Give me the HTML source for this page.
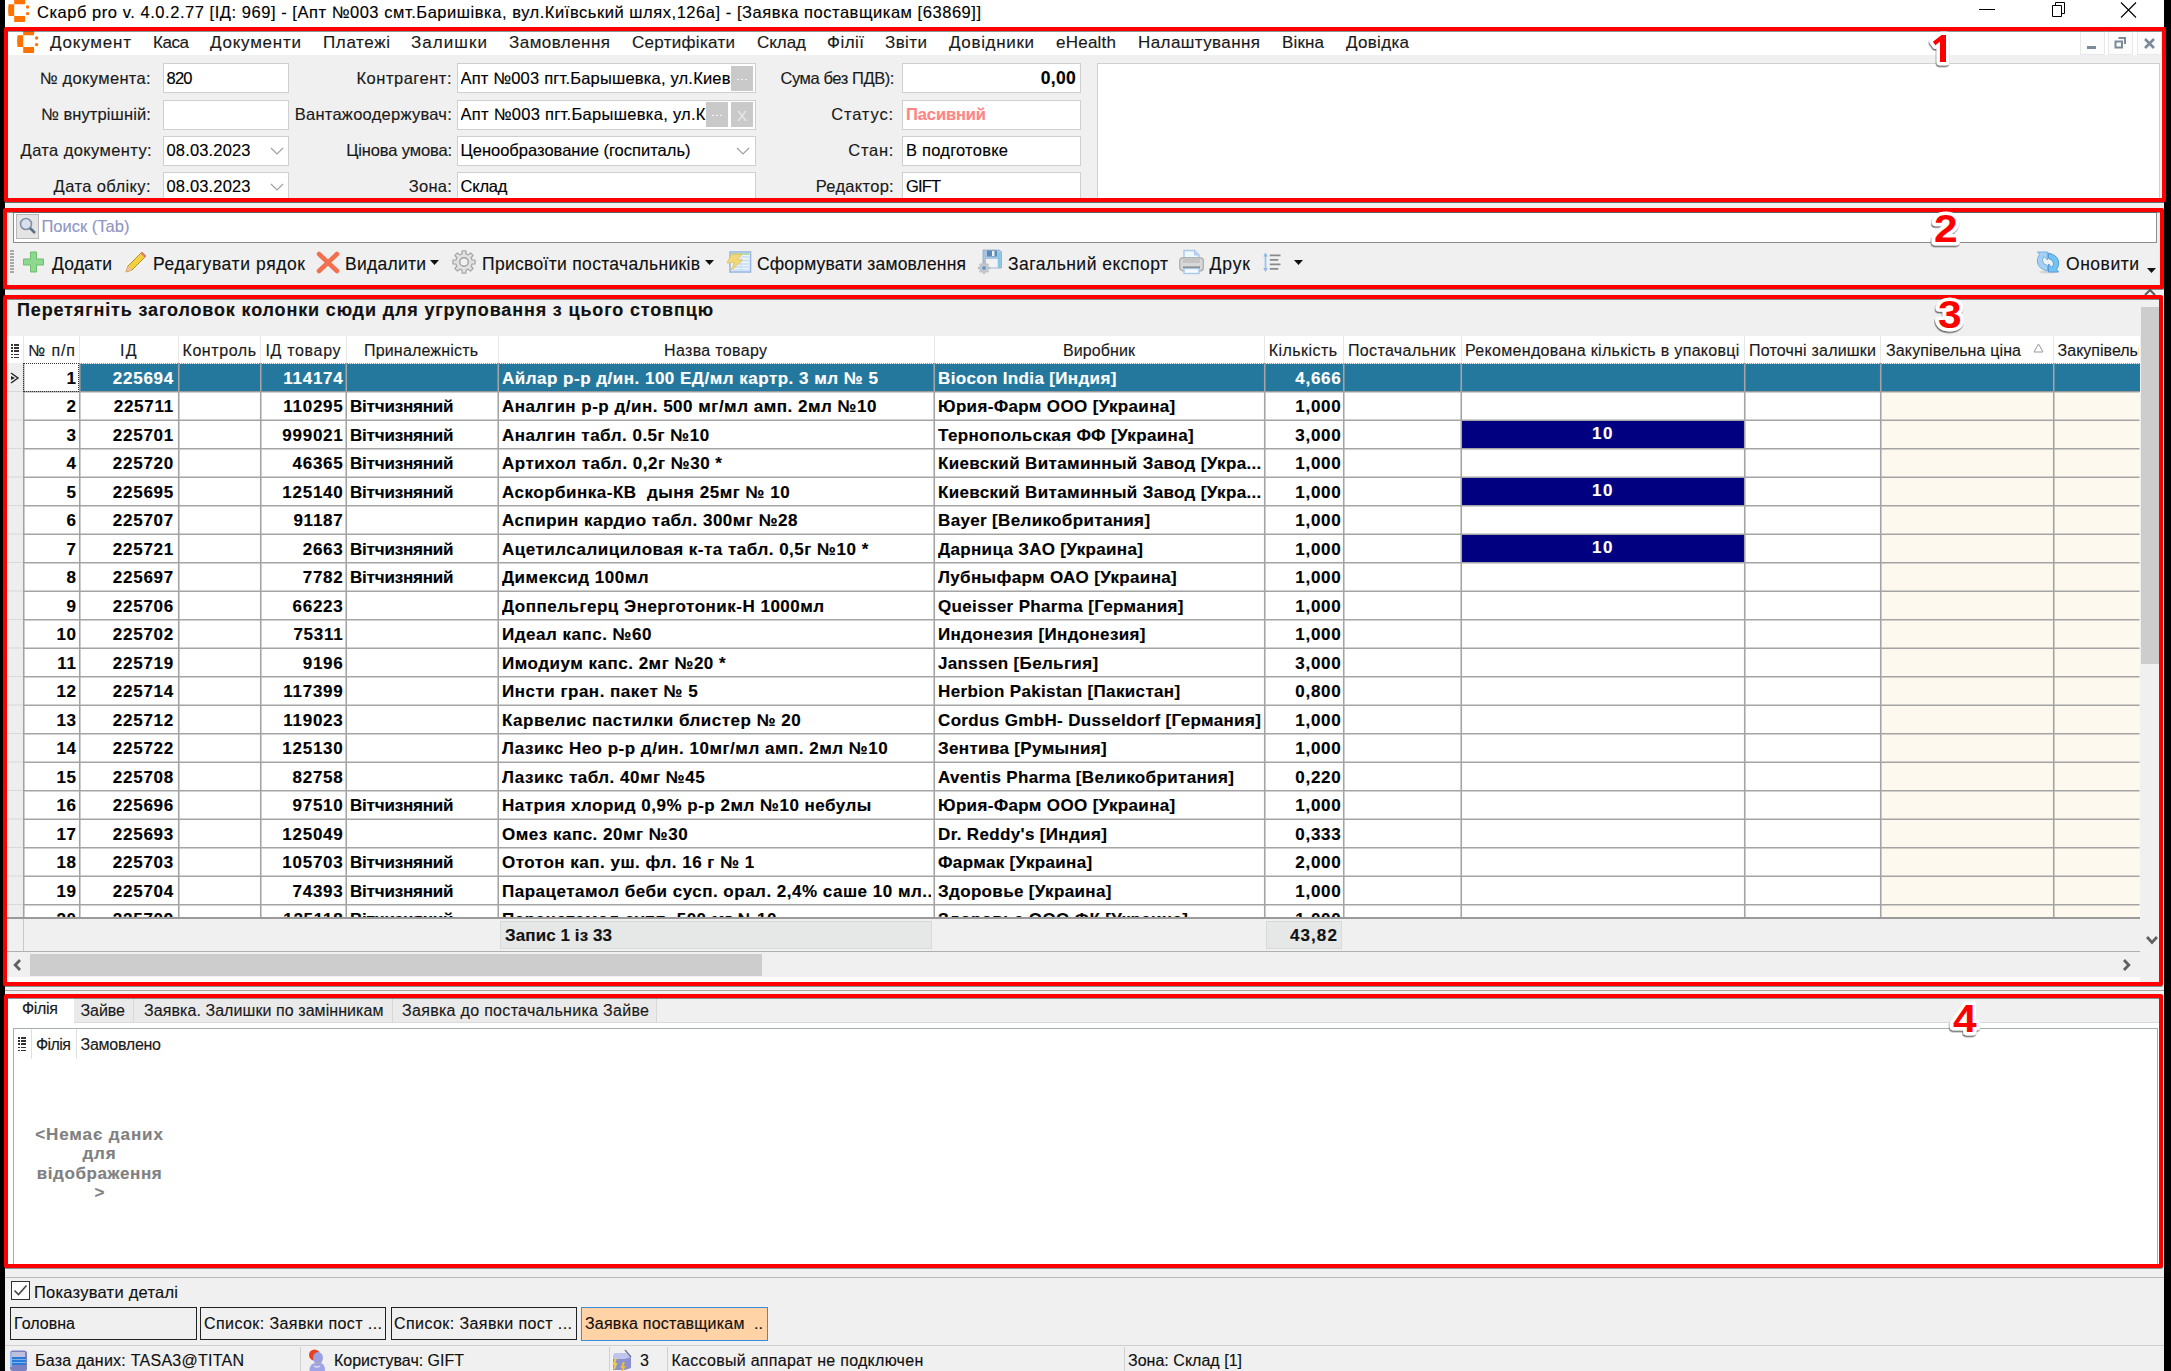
<!DOCTYPE html>
<html><head><meta charset="utf-8"><title>Скарб pro</title>
<style>
html,body{margin:0;padding:0;}
body{width:2171px;height:1371px;overflow:hidden;position:relative;background:#f0f0f0;font-family:"Liberation Sans", sans-serif;-webkit-font-smoothing:antialiased;-webkit-text-stroke:0.15px currentColor;}
div{box-sizing:content-box;}
</style></head><body>
<div style="position:absolute;left:0px;top:0px;width:2171px;height:26px;background:#fff"></div>
<svg style="position:absolute;left:8.2px;top:-1.5px" width="22" height="24" viewBox="0 0 22 24">
<path d="M6.2 0.3 H16.8 Q17.6 2.5 16.9 5.3 H6.2 Z" fill="#ff7200"/>
<path d="M0.6 5.3 H6.2 V17 H0.6 Q-0.3 11 0.6 5.3 Z" fill="#ff7200"/>
<path d="M6.2 17 H16.9 Q17.6 19.8 16.8 23 H6.2 Z" fill="#ff7200"/>
<path d="M6.2 5.3 Q4 5.5 3.2 5.3 Z" fill="#ff7200"/>
<circle cx="19.6" cy="8" r="1.7" fill="#ff7200"/><circle cx="19.6" cy="14.6" r="1.7" fill="#ff7200"/></svg>
<div id="t0" style="position:absolute;left:37px;top:2.77px;font-size:16.5px;font-weight:400;color:#000;white-space:pre;line-height:normal;letter-spacing:0.539px;"><span>Скарб pro v. 4.0.2.77 [ІД: 969] - [Апт №003 смт.Баришівка, вул.Київський шлях,126а] - [Заявка поставщикам [63869]]</span></div>
<div style="position:absolute;left:1979px;top:9px;width:16px;height:1px;background:#000"></div>
<svg style="position:absolute;left:2048px;top:1px" width="20" height="18" viewBox="0 0 20 18"><path d="M4.5 4.5 H13.5 V15.5 H4.5 Z M7.5 4.5 V1.5 H16.5 V12.5 H13.5" fill="none" stroke="#000" stroke-width="1"/></svg>
<svg style="position:absolute;left:2119px;top:1px" width="19" height="18" viewBox="0 0 19 18"><path d="M2 1.5 L17 16.5 M17 1.5 L2 16.5" stroke="#000" stroke-width="1.1"/></svg>
<div style="position:absolute;left:0px;top:26px;width:2171px;height:29px;background:#fff"></div>
<svg style="position:absolute;left:16.9px;top:30.4px" width="22" height="24" viewBox="0 0 22 24">
<path d="M6.2 0.3 H16.8 Q17.6 2.5 16.9 5.3 H6.2 Z" fill="#ff7200"/>
<path d="M0.6 5.3 H6.2 V17 H0.6 Q-0.3 11 0.6 5.3 Z" fill="#ff7200"/>
<path d="M6.2 17 H16.9 Q17.6 19.8 16.8 23 H6.2 Z" fill="#ff7200"/>
<path d="M6.2 5.3 Q4 5.5 3.2 5.3 Z" fill="#ff7200"/>
<circle cx="19.6" cy="8" r="1.7" fill="#ff7200"/><circle cx="19.6" cy="14.6" r="1.7" fill="#ff7200"/></svg>
<div id="t1" style="position:absolute;left:50px;top:32.91px;font-size:17px;font-weight:400;color:#1a1a1a;white-space:pre;line-height:normal;letter-spacing:0.797px;"><span>Документ</span></div>
<div id="t2" style="position:absolute;left:153px;top:32.91px;font-size:17px;font-weight:400;color:#1a1a1a;white-space:pre;line-height:normal;letter-spacing:-0.438px;"><span>Каса</span></div>
<div id="t3" style="position:absolute;left:210px;top:32.91px;font-size:17px;font-weight:400;color:#1a1a1a;white-space:pre;line-height:normal;letter-spacing:0.760px;"><span>Документи</span></div>
<div id="t4" style="position:absolute;left:323px;top:32.91px;font-size:17px;font-weight:400;color:#1a1a1a;white-space:pre;line-height:normal;letter-spacing:0.628px;"><span>Платежі</span></div>
<div id="t5" style="position:absolute;left:411px;top:32.91px;font-size:17px;font-weight:400;color:#1a1a1a;white-space:pre;line-height:normal;letter-spacing:1.047px;"><span>Залишки</span></div>
<div id="t6" style="position:absolute;left:509px;top:32.91px;font-size:17px;font-weight:400;color:#1a1a1a;white-space:pre;line-height:normal;letter-spacing:0.458px;"><span>Замовлення</span></div>
<div id="t7" style="position:absolute;left:632px;top:32.91px;font-size:17px;font-weight:400;color:#1a1a1a;white-space:pre;line-height:normal;letter-spacing:0.295px;"><span>Сертифікати</span></div>
<div id="t8" style="position:absolute;left:757px;top:32.91px;font-size:17px;font-weight:400;color:#1a1a1a;white-space:pre;line-height:normal;letter-spacing:-0.051px;"><span>Склад</span></div>
<div id="t9" style="position:absolute;left:827px;top:32.91px;font-size:17px;font-weight:400;color:#1a1a1a;white-space:pre;line-height:normal;letter-spacing:0.469px;"><span>Філії</span></div>
<div id="t10" style="position:absolute;left:885px;top:32.91px;font-size:17px;font-weight:400;color:#1a1a1a;white-space:pre;line-height:normal;letter-spacing:0.410px;"><span>Звіти</span></div>
<div id="t11" style="position:absolute;left:949px;top:32.91px;font-size:17px;font-weight:400;color:#1a1a1a;white-space:pre;line-height:normal;letter-spacing:0.660px;"><span>Довідники</span></div>
<div id="t12" style="position:absolute;left:1056px;top:32.91px;font-size:17px;font-weight:400;color:#1a1a1a;white-space:pre;line-height:normal;letter-spacing:0.232px;"><span>eHealth</span></div>
<div id="t13" style="position:absolute;left:1138px;top:32.91px;font-size:17px;font-weight:400;color:#1a1a1a;white-space:pre;line-height:normal;letter-spacing:0.409px;"><span>Налаштування</span></div>
<div id="t14" style="position:absolute;left:1282px;top:32.91px;font-size:17px;font-weight:400;color:#1a1a1a;white-space:pre;line-height:normal;letter-spacing:0.148px;"><span>Вікна</span></div>
<div id="t15" style="position:absolute;left:1346px;top:32.91px;font-size:17px;font-weight:400;color:#1a1a1a;white-space:pre;line-height:normal;letter-spacing:0.307px;"><span>Довідка</span></div>
<div style="position:absolute;left:2080px;top:31px;width:25px;height:24px;background:#fcfcfc;border:1px solid #e8e8e8;box-sizing:border-box"></div>
<div style="position:absolute;left:2108px;top:31px;width:25px;height:24px;background:#fcfcfc;border:1px solid #e8e8e8;box-sizing:border-box"></div>
<div style="position:absolute;left:2137px;top:31px;width:25px;height:24px;background:#fcfcfc;border:1px solid #e8e8e8;box-sizing:border-box"></div>
<div style="position:absolute;left:2087px;top:46px;width:9px;height:3px;background:#7a8a99"></div>
<svg style="position:absolute;left:2114px;top:36px" width="14" height="14" viewBox="0 0 14 14"><path d="M4.5 2 H11 V8 M1.5 5.5 H8 V11.5 H1.5 Z" fill="none" stroke="#7a8a99" stroke-width="2"/></svg>
<svg style="position:absolute;left:2143px;top:37px" width="13" height="13" viewBox="0 0 13 13"><path d="M2 2 L11 11 M11 2 L2 11" stroke="#7a8a99" stroke-width="2.6"/></svg>
<div style="position:absolute;left:0px;top:55px;width:2171px;height:147px;background:#f0f0f0"></div>
<div id="t16" style="position:absolute;right:2020px;top:68.77px;font-size:16.5px;font-weight:400;color:#1a1a1a;white-space:pre;line-height:normal;letter-spacing:0.334px;"><span>№ документа:</span></div>
<div id="t17" style="position:absolute;right:2020px;top:104.77px;font-size:16.5px;font-weight:400;color:#1a1a1a;white-space:pre;line-height:normal;letter-spacing:0.113px;"><span>№ внутрішній:</span></div>
<div id="t18" style="position:absolute;right:2019px;top:140.77px;font-size:16.5px;font-weight:400;color:#1a1a1a;white-space:pre;line-height:normal;letter-spacing:0.385px;"><span>Дата документу:</span></div>
<div id="t19" style="position:absolute;right:2020px;top:176.77px;font-size:16.5px;font-weight:400;color:#1a1a1a;white-space:pre;line-height:normal;letter-spacing:0.405px;"><span>Дата обліку:</span></div>
<div style="position:absolute;left:163px;top:63px;width:126px;height:30px;background:#fff;border:1px solid #cfcfcf;box-sizing:border-box"></div>
<div style="position:absolute;left:163px;top:99.5px;width:126px;height:30.0px;background:#fff;border:1px solid #cfcfcf;box-sizing:border-box"></div>
<div style="position:absolute;left:163px;top:135.5px;width:126px;height:30.0px;background:#fff;border:1px solid #cfcfcf;box-sizing:border-box"></div>
<div style="position:absolute;left:163px;top:171.5px;width:126px;height:30.0px;background:#fff;border:1px solid #cfcfcf;box-sizing:border-box"></div>
<div id="t20" style="position:absolute;left:166.5px;top:68.77px;font-size:16.5px;font-weight:400;color:#000;white-space:pre;line-height:normal;letter-spacing:-0.766px;"><span>820</span></div>
<div id="t21" style="position:absolute;left:166.5px;top:140.77px;font-size:16.5px;font-weight:400;color:#000;white-space:pre;line-height:normal;letter-spacing:0.156px;"><span>08.03.2023</span></div>
<div id="t22" style="position:absolute;left:166.5px;top:176.77px;font-size:16.5px;font-weight:400;color:#000;white-space:pre;line-height:normal;letter-spacing:0.156px;"><span>08.03.2023</span></div>
<svg style="position:absolute;left:270px;top:147px" width="14" height="8" viewBox="0 0 14 8"><path d="M1 1 L7 7 L13 1" fill="none" stroke="#a0a0a0" stroke-width="1.2"/></svg>
<svg style="position:absolute;left:270px;top:183px" width="14" height="8" viewBox="0 0 14 8"><path d="M1 1 L7 7 L13 1" fill="none" stroke="#a0a0a0" stroke-width="1.2"/></svg>
<div id="t23" style="position:absolute;right:1719px;top:68.77px;font-size:16.5px;font-weight:400;color:#1a1a1a;white-space:pre;line-height:normal;letter-spacing:0.509px;"><span>Контрагент:</span></div>
<div id="t24" style="position:absolute;right:1719px;top:104.77px;font-size:16.5px;font-weight:400;color:#1a1a1a;white-space:pre;line-height:normal;letter-spacing:0.256px;"><span>Вантажоодержувач:</span></div>
<div id="t25" style="position:absolute;right:1719px;top:140.77px;font-size:16.5px;font-weight:400;color:#1a1a1a;white-space:pre;line-height:normal;letter-spacing:-0.120px;"><span>Цінова умова:</span></div>
<div id="t26" style="position:absolute;right:1719px;top:176.77px;font-size:16.5px;font-weight:400;color:#1a1a1a;white-space:pre;line-height:normal;letter-spacing:0.246px;"><span>Зона:</span></div>
<div style="position:absolute;left:457px;top:63px;width:299px;height:30px;background:#fff;border:1px solid #cfcfcf;box-sizing:border-box"></div>
<div style="position:absolute;left:457px;top:99.5px;width:299px;height:30.0px;background:#fff;border:1px solid #cfcfcf;box-sizing:border-box"></div>
<div style="position:absolute;left:457px;top:135.5px;width:299px;height:30.0px;background:#fff;border:1px solid #cfcfcf;box-sizing:border-box"></div>
<div style="position:absolute;left:457px;top:171.5px;width:299px;height:30.0px;background:#fff;border:1px solid #cfcfcf;box-sizing:border-box"></div>
<div id="t27" style="position:absolute;left:460.5px;top:68.77px;font-size:16.5px;font-weight:400;color:#000;white-space:pre;line-height:normal;letter-spacing:0.194px;width:270px;overflow:hidden;"><span>Апт №003 пгт.Барышевка, ул.Киев</span></div>
<div id="t28" style="position:absolute;left:460.5px;top:104.77px;font-size:16.5px;font-weight:400;color:#000;white-space:pre;line-height:normal;letter-spacing:0.295px;width:245px;overflow:hidden;"><span>Апт №003 пгт.Барышевка, ул.К</span></div>
<div id="t29" style="position:absolute;left:460.5px;top:140.77px;font-size:16.5px;font-weight:400;color:#000;white-space:pre;line-height:normal;letter-spacing:0.005px;"><span>Ценообразование (госпиталь)</span></div>
<div id="t30" style="position:absolute;left:460.5px;top:176.77px;font-size:16.5px;font-weight:400;color:#000;white-space:pre;line-height:normal;letter-spacing:-0.191px;"><span>Склад</span></div>
<div style="position:absolute;left:731px;top:66px;width:22px;height:25px;background:#c9c9c9"></div>
<div style="position:absolute;left:737px;top:78.5px;width:2px;height:1px;background:#f4f4f4"></div>
<div style="position:absolute;left:741px;top:78.5px;width:2px;height:1px;background:#f4f4f4"></div>
<div style="position:absolute;left:745px;top:78.5px;width:2px;height:1px;background:#f4f4f4"></div>
<div style="position:absolute;left:706px;top:102px;width:22px;height:25px;background:#c9c9c9"></div>
<div style="position:absolute;left:712px;top:114.5px;width:2px;height:1px;background:#f4f4f4"></div>
<div style="position:absolute;left:716px;top:114.5px;width:2px;height:1px;background:#f4f4f4"></div>
<div style="position:absolute;left:720px;top:114.5px;width:2px;height:1px;background:#f4f4f4"></div>
<div style="position:absolute;left:731px;top:102px;width:22px;height:25px;background:#c9c9c9"></div>
<div id="t31" style="position:absolute;left:731.0px;width:22px;text-align:center;top:107.42px;font-size:15px;font-weight:400;color:#e8e8e8;white-space:pre;line-height:normal;"><span>X</span></div>
<svg style="position:absolute;left:736px;top:147px" width="14" height="8" viewBox="0 0 14 8"><path d="M1 1 L7 7 L13 1" fill="none" stroke="#a0a0a0" stroke-width="1.2"/></svg>
<div id="t32" style="position:absolute;right:1277px;top:68.77px;font-size:16.5px;font-weight:400;color:#1a1a1a;white-space:pre;line-height:normal;letter-spacing:-0.418px;"><span>Сума без ПДВ):</span></div>
<div id="t33" style="position:absolute;right:1277px;top:104.77px;font-size:16.5px;font-weight:400;color:#1a1a1a;white-space:pre;line-height:normal;letter-spacing:0.875px;"><span>Статус:</span></div>
<div id="t34" style="position:absolute;right:1277px;top:140.77px;font-size:16.5px;font-weight:400;color:#1a1a1a;white-space:pre;line-height:normal;letter-spacing:0.707px;"><span>Стан:</span></div>
<div id="t35" style="position:absolute;right:1277px;top:176.77px;font-size:16.5px;font-weight:400;color:#1a1a1a;white-space:pre;line-height:normal;letter-spacing:0.297px;"><span>Редактор:</span></div>
<div style="position:absolute;left:902px;top:63px;width:179px;height:30px;background:#fff;border:1px solid #cfcfcf;box-sizing:border-box"></div>
<div style="position:absolute;left:902px;top:99.5px;width:179px;height:30.0px;background:#fff;border:1px solid #cfcfcf;box-sizing:border-box"></div>
<div style="position:absolute;left:902px;top:135.5px;width:179px;height:30.0px;background:#fff;border:1px solid #cfcfcf;box-sizing:border-box"></div>
<div style="position:absolute;left:902px;top:171.5px;width:179px;height:30.0px;background:#fff;border:1px solid #cfcfcf;box-sizing:border-box"></div>
<div id="t36" style="position:absolute;right:1095px;top:67.86px;font-size:17.5px;font-weight:700;color:#000;white-space:pre;line-height:normal;letter-spacing:0.312px;"><span>0,00</span></div>
<div id="t37" style="position:absolute;left:906px;top:104.77px;font-size:16.5px;font-weight:700;color:#ff8585;white-space:pre;line-height:normal;letter-spacing:-0.109px;"><span>Пасивний</span></div>
<div id="t38" style="position:absolute;left:906px;top:140.77px;font-size:16.5px;font-weight:400;color:#000;white-space:pre;line-height:normal;letter-spacing:0.241px;"><span>В подготовке</span></div>
<div id="t39" style="position:absolute;left:906px;top:176.77px;font-size:16.5px;font-weight:400;color:#000;white-space:pre;line-height:normal;letter-spacing:-0.859px;"><span>GIFT</span></div>
<div style="position:absolute;left:1097px;top:63px;width:1063px;height:147px;background:#fff;border:1px solid #d0d0d0;box-sizing:border-box"></div>
<div style="position:absolute;left:0px;top:202px;width:2171px;height:6px;background:#f0f0f0"></div>
<div style="position:absolute;left:0px;top:202px;width:2171px;height:1px;background:#a0a0a0"></div>
<div style="position:absolute;left:0px;top:208px;width:2171px;height:80px;background:#f0f0f0"></div>
<div style="position:absolute;left:12.5px;top:212px;width:2144.5px;height:30.5px;background:#fff;border:1px solid #8c8c8c;box-sizing:border-box"></div>
<div style="position:absolute;left:16px;top:214px;width:23px;height:25px;background:#e4e4e4;border:1px solid #b8b8b8;box-sizing:border-box"></div>
<svg style="position:absolute;left:18px;top:216px" width="20" height="20" viewBox="0 0 20 20"><circle cx="8" cy="8" r="5.5" fill="#d8e0ec" stroke="#8090a8" stroke-width="1.6"/><path d="M12 12 L17 17" stroke="#607080" stroke-width="2.6"/></svg>
<div id="t40" style="position:absolute;left:41.5px;top:217.07px;font-size:16.5px;font-weight:400;color:#9196c4;white-space:pre;line-height:normal;letter-spacing:0.009px;"><span>Поиск (Tab)</span></div>
<div style="position:absolute;left:10px;top:250px;width:4px;height:1.5px;background:#a8a8a8"></div>
<div style="position:absolute;left:10px;top:253px;width:4px;height:1.5px;background:#a8a8a8"></div>
<div style="position:absolute;left:10px;top:256px;width:4px;height:1.5px;background:#a8a8a8"></div>
<div style="position:absolute;left:10px;top:259px;width:4px;height:1.5px;background:#a8a8a8"></div>
<div style="position:absolute;left:10px;top:262px;width:4px;height:1.5px;background:#a8a8a8"></div>
<div style="position:absolute;left:10px;top:265px;width:4px;height:1.5px;background:#a8a8a8"></div>
<div style="position:absolute;left:10px;top:268px;width:4px;height:1.5px;background:#a8a8a8"></div>
<div style="position:absolute;left:10px;top:271px;width:4px;height:1.5px;background:#a8a8a8"></div>
<svg style="position:absolute;left:22px;top:251px" width="23" height="22" viewBox="0 0 23 22"><path d="M8.5 1 H14.5 V8 H21.5 V14 H14.5 V21 H8.5 V14 H1.5 V8 H8.5 Z" fill="#8fd88f" stroke="#6cbf6c" stroke-width="1"/></svg>
<div id="t41" style="position:absolute;left:52px;top:254.16px;font-size:17.5px;font-weight:400;color:#111;white-space:pre;line-height:normal;letter-spacing:0.250px;"><span>Додати</span></div>
<svg style="position:absolute;left:123px;top:250px" width="25" height="25" viewBox="0 0 25 25"><path d="M3 22 L5 16 L19 2 L23 6 L9 20 Z" fill="#f2d040" stroke="#b89020" stroke-width="1"/><path d="M19 2 L23 6 L21.5 7.5 L17.5 3.5 Z" fill="#e88080"/><path d="M3 22 L5 16 L9 20 Z" fill="#f0c0a0"/></svg>
<div id="t42" style="position:absolute;left:153px;top:254.16px;font-size:17.5px;font-weight:400;color:#111;white-space:pre;line-height:normal;letter-spacing:0.597px;"><span>Редагувати рядок</span></div>
<svg style="position:absolute;left:316px;top:251px" width="24" height="23" viewBox="0 0 24 23"><path d="M3 3 L21 20 M21 3 L3 20" stroke="#f07050" stroke-width="4.5" stroke-linecap="round"/></svg>
<div id="t43" style="position:absolute;left:345px;top:254.16px;font-size:17.5px;font-weight:400;color:#111;white-space:pre;line-height:normal;letter-spacing:0.261px;"><span>Видалити</span></div>
<svg style="position:absolute;left:430px;top:260px" width="9" height="5" viewBox="0 0 9 5"><path d="M0 0 H9 L4.5 5 Z" fill="#111"/></svg>
<svg style="position:absolute;left:452px;top:250px" width="24" height="24" viewBox="0 0 24 24"><path d="M20.05 9.97 L23.05 10.16 L23.05 13.84 L20.05 14.03 L19.13 16.25 L21.11 18.51 L18.51 21.11 L16.25 19.13 L14.03 20.05 L13.84 23.05 L10.16 23.05 L9.97 20.05 L7.75 19.13 L5.49 21.11 L2.89 18.51 L4.87 16.25 L3.95 14.03 L0.95 13.84 L0.95 10.16 L3.95 9.97 L4.87 7.75 L2.89 5.49 L5.49 2.89 L7.75 4.87 L9.97 3.95 L10.16 0.95 L13.84 0.95 L14.03 3.95 L16.25 4.87 L18.51 2.89 L21.11 5.49 L19.13 7.75 Z" fill="#e2e2e2" stroke="#a8a8a8" stroke-width="1.3" stroke-linejoin="round"/><circle cx="12" cy="12" r="4.3" fill="#f2f2f2" stroke="#a0a0a0" stroke-width="1.4"/></svg>
<div id="t44" style="position:absolute;left:482px;top:254.16px;font-size:17.5px;font-weight:400;color:#111;white-space:pre;line-height:normal;letter-spacing:0.314px;"><span>Присвоїти постачальників</span></div>
<svg style="position:absolute;left:705px;top:260px" width="9" height="5" viewBox="0 0 9 5"><path d="M0 0 H9 L4.5 5 Z" fill="#111"/></svg>
<svg style="position:absolute;left:725px;top:250px" width="28" height="24" viewBox="0 0 28 24"><rect x="5" y="2" width="20.5" height="20" fill="#eef4fc" stroke="#9ab8e0" stroke-width="1.6"/><path d="M17 7 H24 M8 10.5 H24 M8 14 H24 M8 17 H24 M8 20 H24" stroke="#c8dcf4" stroke-width="1.4"/><path d="M16 5 V21" stroke="#c8dcf4" stroke-width="1"/><path d="M6 4 H24" stroke="#a8d8a8" stroke-width="1.8"/><path d="M6.5 4.2 H17 L12.5 9.5 L17.5 10 L6 20.5 L9.5 12.5 L2 13 Z" fill="#f0d878" stroke="#e0c060" stroke-width="0.8"/></svg>
<div id="t45" style="position:absolute;left:757px;top:254.16px;font-size:17.5px;font-weight:400;color:#111;white-space:pre;line-height:normal;letter-spacing:0.163px;"><span>Сформувати замовлення</span></div>
<svg style="position:absolute;left:978px;top:249px" width="25" height="26" viewBox="0 0 25 26"><path d="M5 1 H21.5 L23.5 3 V19 H5 Z" fill="#a8c4e0" stroke="#8aa8c8" stroke-width="0.8"/><rect x="9" y="1.5" width="10" height="6" fill="#5a88b8"/><rect x="14" y="2" width="2.5" height="5" fill="#f0f0f0"/><rect x="8" y="10" width="12" height="8.5" fill="#f2f2f2"/><path d="M21 4 V18" stroke="#7cc8e8" stroke-width="2.5"/><g transform="translate(0,13)"><path d="M9.88 5.02 L11.43 5.10 L11.43 6.90 L9.88 6.98 L9.43 8.05 L10.47 9.20 L9.20 10.47 L8.05 9.43 L6.98 9.88 L6.90 11.43 L5.10 11.43 L5.02 9.88 L3.95 9.43 L2.80 10.47 L1.53 9.20 L2.57 8.05 L2.12 6.98 L0.57 6.90 L0.57 5.10 L2.12 5.02 L2.57 3.95 L1.53 2.80 L2.80 1.53 L3.95 2.57 L5.02 2.12 L5.10 0.57 L6.90 0.57 L6.98 2.12 L8.05 2.57 L9.20 1.53 L10.47 2.80 L9.43 3.95 Z" fill="#c8ccd0" stroke="#b0b4b8" stroke-width="0.8"/><circle cx="6" cy="6" r="2" fill="#6a98c0"/></g></svg>
<div id="t46" style="position:absolute;left:1008px;top:254.16px;font-size:17.5px;font-weight:400;color:#111;white-space:pre;line-height:normal;letter-spacing:0.478px;"><span>Загальний експорт</span></div>
<svg style="position:absolute;left:1179px;top:249px" width="25" height="26" viewBox="0 0 25 26"><path d="M5 1.5 H15.5 L20 6 V9 H5 Z" fill="#f0f8ff" stroke="#a8c8ec" stroke-width="1.4"/><path d="M15.5 1.5 V6 H20" fill="#b8d4f0" stroke="#a8c8ec" stroke-width="1"/><rect x="0.8" y="8.8" width="23.5" height="13" rx="3" fill="#d8d8d8" stroke="#a8a8a8" stroke-width="1.2"/><rect x="4" y="9" width="17" height="5" fill="#c4c4c4"/><path d="M4 18.5 H21" stroke="#808080" stroke-width="2"/><rect x="5" y="19.5" width="15" height="5" fill="#f4faff" stroke="#a8c8ec" stroke-width="1.4"/></svg>
<div id="t47" style="position:absolute;left:1209.5px;top:254.16px;font-size:17.5px;font-weight:400;color:#111;white-space:pre;line-height:normal;letter-spacing:0.901px;"><span>Друк</span></div>
<svg style="position:absolute;left:1262px;top:251px" width="20" height="22" viewBox="0 0 20 22"><path d="M3.5 3 V19" stroke="#9ec4ee" stroke-width="1.8"/><path d="M1.2 5.5 L3.5 1.5 L5.8 5.5 Z M1.2 17 L3.5 21 L5.8 17 Z" fill="#90b8ea"/><path d="M7.8 4.3 H18.5 M7.8 8.8 H16.3 M7.8 13.3 H18.5 M7.8 17.9 H16.3" stroke="#8a8a8a" stroke-width="1.8"/></svg>
<svg style="position:absolute;left:1294px;top:260px" width="9" height="5" viewBox="0 0 9 5"><path d="M0 0 H9 L4.5 5 Z" fill="#111"/></svg>
<svg style="position:absolute;left:2036px;top:251px" width="24" height="23" viewBox="0 0 24 23"><ellipse cx="12" cy="21" rx="9" ry="1.5" fill="#c8c8c8" opacity="0.7"/><path d="M11.5 1 H1.5 L3.5 3.5 Q0.5 7 1.5 12 Q3 18 11.5 20 L11.5 14.5 Q7 13.5 6.5 10 Q6.5 7 8 5.5 L11.5 9 Z" fill="#a4d0f4" stroke="#78b0e4" stroke-width="1"/><path d="M12.5 21 H22.5 L20.5 18.5 Q23.5 15 22.5 10 Q21 4 12.5 2 L12.5 7.5 Q17 8.5 17.5 12 Q17.5 15 16 16.5 L12.5 13 Z" fill="#70c4f4" stroke="#5a9ad8" stroke-width="1"/></svg>
<div id="t48" style="position:absolute;left:2066px;top:254.16px;font-size:17.5px;font-weight:400;color:#111;white-space:pre;line-height:normal;letter-spacing:0.521px;"><span>Оновити</span></div>
<svg style="position:absolute;left:2147px;top:268px" width="9" height="5" viewBox="0 0 9 5"><path d="M0 0 H9 L4.5 5 Z" fill="#111"/></svg>
<div style="position:absolute;left:0px;top:288px;width:2171px;height:6px;background:#f0f0f0"></div>
<div style="position:absolute;left:0px;top:288px;width:2171px;height:1px;background:#a0a0a0"></div>
<div style="position:absolute;left:0px;top:294px;width:2171px;height:688px;background:#f0f0f0"></div>
<div id="t49" style="position:absolute;left:17px;top:299.81px;font-size:18px;font-weight:700;color:#111;white-space:pre;line-height:normal;letter-spacing:0.849px;"><span>Перетягніть заголовок колонки сюди для угруповання з цього стовпцю</span></div>
<div style="position:absolute;left:7px;top:336px;width:2132.5px;height:27px;background:#fff"></div>
<div style="position:absolute;left:23px;top:336px;width:1px;height:27px;background:#e6e6e6"></div>
<div style="position:absolute;left:79px;top:336px;width:1px;height:27px;background:#e6e6e6"></div>
<div style="position:absolute;left:178px;top:336px;width:1px;height:27px;background:#e6e6e6"></div>
<div style="position:absolute;left:260px;top:336px;width:1px;height:27px;background:#e6e6e6"></div>
<div style="position:absolute;left:345.5px;top:336px;width:1px;height:27px;background:#e6e6e6"></div>
<div style="position:absolute;left:497.5px;top:336px;width:1px;height:27px;background:#e6e6e6"></div>
<div style="position:absolute;left:933.5px;top:336px;width:1px;height:27px;background:#e6e6e6"></div>
<div style="position:absolute;left:1264px;top:336px;width:1px;height:27px;background:#e6e6e6"></div>
<div style="position:absolute;left:1343px;top:336px;width:1px;height:27px;background:#e6e6e6"></div>
<div style="position:absolute;left:1460.5px;top:336px;width:1px;height:27px;background:#e6e6e6"></div>
<div style="position:absolute;left:1744px;top:336px;width:1px;height:27px;background:#e6e6e6"></div>
<div style="position:absolute;left:1880px;top:336px;width:1px;height:27px;background:#e6e6e6"></div>
<div style="position:absolute;left:2053px;top:336px;width:1px;height:27px;background:#e6e6e6"></div>
<div style="position:absolute;left:11px;top:344.0px;width:1.5px;height:1.5px;background:#333"></div>
<div style="position:absolute;left:14px;top:344.0px;width:5px;height:1.5px;background:#333"></div>
<div style="position:absolute;left:11px;top:347.2px;width:1.5px;height:1.5px;background:#333"></div>
<div style="position:absolute;left:14px;top:347.2px;width:5px;height:1.5px;background:#333"></div>
<div style="position:absolute;left:11px;top:350.4px;width:1.5px;height:1.5px;background:#333"></div>
<div style="position:absolute;left:14px;top:350.4px;width:5px;height:1.5px;background:#333"></div>
<div style="position:absolute;left:11px;top:353.6px;width:1.5px;height:1.5px;background:#333"></div>
<div style="position:absolute;left:14px;top:353.6px;width:5px;height:1.5px;background:#333"></div>
<div style="position:absolute;left:11px;top:356.8px;width:1.5px;height:1.5px;background:#333"></div>
<div style="position:absolute;left:14px;top:356.8px;width:5px;height:1.5px;background:#333"></div>
<div id="t50" style="position:absolute;left:28px;top:342.02px;font-size:16px;font-weight:400;color:#1a1a1a;white-space:pre;line-height:normal;letter-spacing:0.902px;"><span>№ п/п</span></div>
<div id="t51" style="position:absolute;left:120px;top:342.02px;font-size:16px;font-weight:400;color:#1a1a1a;white-space:pre;line-height:normal;letter-spacing:1.219px;"><span>ІД</span></div>
<div id="t52" style="position:absolute;left:182.5px;top:342.02px;font-size:16px;font-weight:400;color:#1a1a1a;white-space:pre;line-height:normal;letter-spacing:0.571px;"><span>Контроль</span></div>
<div id="t53" style="position:absolute;left:265.4px;top:342.02px;font-size:16px;font-weight:400;color:#1a1a1a;white-space:pre;line-height:normal;letter-spacing:0.685px;"><span>ІД товару</span></div>
<div id="t54" style="position:absolute;left:364px;top:342.02px;font-size:16px;font-weight:400;color:#1a1a1a;white-space:pre;line-height:normal;letter-spacing:0.176px;"><span>Приналежність</span></div>
<div id="t55" style="position:absolute;left:664px;top:342.02px;font-size:16px;font-weight:400;color:#1a1a1a;white-space:pre;line-height:normal;letter-spacing:0.339px;"><span>Назва товару</span></div>
<div id="t56" style="position:absolute;left:1063px;top:342.02px;font-size:16px;font-weight:400;color:#1a1a1a;white-space:pre;line-height:normal;letter-spacing:0.094px;"><span>Виробник</span></div>
<div id="t57" style="position:absolute;left:1268.7px;top:342.02px;font-size:16px;font-weight:400;color:#1a1a1a;white-space:pre;line-height:normal;letter-spacing:0.442px;"><span>Кількість</span></div>
<div id="t58" style="position:absolute;left:1348px;top:342.02px;font-size:16px;font-weight:400;color:#1a1a1a;white-space:pre;line-height:normal;letter-spacing:0.347px;"><span>Постачальник</span></div>
<div id="t59" style="position:absolute;left:1465px;top:342.02px;font-size:16px;font-weight:400;color:#1a1a1a;white-space:pre;line-height:normal;letter-spacing:0.315px;"><span>Рекомендована кількість в упаковці</span></div>
<div id="t60" style="position:absolute;left:1749px;top:342.02px;font-size:16px;font-weight:400;color:#1a1a1a;white-space:pre;line-height:normal;letter-spacing:0.200px;"><span>Поточні залишки</span></div>
<div id="t61" style="position:absolute;left:1886px;top:342.02px;font-size:16px;font-weight:400;color:#1a1a1a;white-space:pre;line-height:normal;letter-spacing:0.128px;"><span>Закупівельна ціна</span></div>
<div id="t62" style="position:absolute;left:2057.6px;top:342.02px;font-size:16px;font-weight:400;color:#1a1a1a;white-space:pre;line-height:normal;width:81px;overflow:hidden;"><span>Закупівельна ціна</span></div>
<svg style="position:absolute;left:2033px;top:343px" width="11" height="10" viewBox="0 0 11 10"><path d="M5.5 1 L10 9 H1 Z" fill="none" stroke="#999" stroke-width="1"/></svg>
<div style="position:absolute;left:7px;top:363px;width:2132.5px;height:554px;overflow:hidden;background:#fff">
<div style="position:absolute;left:0;top:0.0px;width:16px;height:28.5px;background:#eeeeee"></div><div style="position:absolute;left:72px;top:0.5px;width:2060.5px;height:28.5px;background:#25789d"></div><div style="position:absolute;left:0;top:28.5px;width:16px;height:28.5px;background:#eeeeee"></div><div style="position:absolute;left:1873px;top:28.5px;width:259.5px;height:28.5px;background:#fef9ee"></div><div style="position:absolute;left:0;top:57.0px;width:16px;height:28.5px;background:#eeeeee"></div><div style="position:absolute;left:1873px;top:57.0px;width:259.5px;height:28.5px;background:#fef9ee"></div><div style="position:absolute;left:1453.5px;top:57.5px;width:283.5px;height:28.5px;background:#000080"></div><div style="position:absolute;left:0;top:85.5px;width:16px;height:28.5px;background:#eeeeee"></div><div style="position:absolute;left:1873px;top:85.5px;width:259.5px;height:28.5px;background:#fef9ee"></div><div style="position:absolute;left:0;top:114.0px;width:16px;height:28.5px;background:#eeeeee"></div><div style="position:absolute;left:1873px;top:114.0px;width:259.5px;height:28.5px;background:#fef9ee"></div><div style="position:absolute;left:1453.5px;top:114.5px;width:283.5px;height:28.5px;background:#000080"></div><div style="position:absolute;left:0;top:142.5px;width:16px;height:28.5px;background:#eeeeee"></div><div style="position:absolute;left:1873px;top:142.5px;width:259.5px;height:28.5px;background:#fef9ee"></div><div style="position:absolute;left:0;top:171.0px;width:16px;height:28.5px;background:#eeeeee"></div><div style="position:absolute;left:1873px;top:171.0px;width:259.5px;height:28.5px;background:#fef9ee"></div><div style="position:absolute;left:1453.5px;top:171.5px;width:283.5px;height:28.5px;background:#000080"></div><div style="position:absolute;left:0;top:199.5px;width:16px;height:28.5px;background:#eeeeee"></div><div style="position:absolute;left:1873px;top:199.5px;width:259.5px;height:28.5px;background:#fef9ee"></div><div style="position:absolute;left:0;top:228.0px;width:16px;height:28.5px;background:#eeeeee"></div><div style="position:absolute;left:1873px;top:228.0px;width:259.5px;height:28.5px;background:#fef9ee"></div><div style="position:absolute;left:0;top:256.5px;width:16px;height:28.5px;background:#eeeeee"></div><div style="position:absolute;left:1873px;top:256.5px;width:259.5px;height:28.5px;background:#fef9ee"></div><div style="position:absolute;left:0;top:285.0px;width:16px;height:28.5px;background:#eeeeee"></div><div style="position:absolute;left:1873px;top:285.0px;width:259.5px;height:28.5px;background:#fef9ee"></div><div style="position:absolute;left:0;top:313.5px;width:16px;height:28.5px;background:#eeeeee"></div><div style="position:absolute;left:1873px;top:313.5px;width:259.5px;height:28.5px;background:#fef9ee"></div><div style="position:absolute;left:0;top:342.0px;width:16px;height:28.5px;background:#eeeeee"></div><div style="position:absolute;left:1873px;top:342.0px;width:259.5px;height:28.5px;background:#fef9ee"></div><div style="position:absolute;left:0;top:370.5px;width:16px;height:28.5px;background:#eeeeee"></div><div style="position:absolute;left:1873px;top:370.5px;width:259.5px;height:28.5px;background:#fef9ee"></div><div style="position:absolute;left:0;top:399.0px;width:16px;height:28.5px;background:#eeeeee"></div><div style="position:absolute;left:1873px;top:399.0px;width:259.5px;height:28.5px;background:#fef9ee"></div><div style="position:absolute;left:0;top:427.5px;width:16px;height:28.5px;background:#eeeeee"></div><div style="position:absolute;left:1873px;top:427.5px;width:259.5px;height:28.5px;background:#fef9ee"></div><div style="position:absolute;left:0;top:456.0px;width:16px;height:28.5px;background:#eeeeee"></div><div style="position:absolute;left:1873px;top:456.0px;width:259.5px;height:28.5px;background:#fef9ee"></div><div style="position:absolute;left:0;top:484.5px;width:16px;height:28.5px;background:#eeeeee"></div><div style="position:absolute;left:1873px;top:484.5px;width:259.5px;height:28.5px;background:#fef9ee"></div><div style="position:absolute;left:0;top:513.0px;width:16px;height:28.5px;background:#eeeeee"></div><div style="position:absolute;left:1873px;top:513.0px;width:259.5px;height:28.5px;background:#fef9ee"></div><div style="position:absolute;left:0;top:541.5px;width:16px;height:28.5px;background:#eeeeee"></div><div style="position:absolute;left:1873px;top:541.5px;width:259.5px;height:28.5px;background:#fef9ee"></div><svg style="position:absolute;left:0;top:0" width="2132.5" height="554"><g stroke="#a4a4a4" stroke-width="1.6" fill="none"><path d="M16 28.75 H2132.5" /><path d="M16 57.25 H2132.5" /><path d="M16 85.75 H2132.5" /><path d="M16 114.25 H2132.5" /><path d="M16 142.75 H2132.5" /><path d="M16 171.25 H2132.5" /><path d="M16 199.75 H2132.5" /><path d="M16 228.25 H2132.5" /><path d="M16 256.75 H2132.5" /><path d="M16 285.25 H2132.5" /><path d="M16 313.75 H2132.5" /><path d="M16 342.25 H2132.5" /><path d="M16 370.75 H2132.5" /><path d="M16 399.25 H2132.5" /><path d="M16 427.75 H2132.5" /><path d="M16 456.25 H2132.5" /><path d="M16 484.75 H2132.5" /><path d="M16 513.25 H2132.5" /><path d="M16 541.75 H2132.5" /><path d="M16 570.25 H2132.5" /><path d="M16.75 0 V554" /><path d="M72.75 0 V554" /><path d="M171.75 0 V554" /><path d="M253.75 0 V554" /><path d="M339.25 0 V554" /><path d="M491.25 0 V554" /><path d="M927.25 0 V554" /><path d="M1257.75 0 V554" /><path d="M1336.75 0 V554" /><path d="M1454.25 0 V554" /><path d="M1737.75 0 V554" /><path d="M1873.75 0 V554" /><path d="M2046.75 0 V554" /></g><g stroke="#d8d8d8" stroke-width="1"><path d="M0 28.5 H16"/><path d="M0 57.0 H16"/><path d="M0 85.5 H16"/><path d="M0 114.0 H16"/><path d="M0 142.5 H16"/><path d="M0 171.0 H16"/><path d="M0 199.5 H16"/><path d="M0 228.0 H16"/><path d="M0 256.5 H16"/><path d="M0 285.0 H16"/><path d="M0 313.5 H16"/><path d="M0 342.0 H16"/><path d="M0 370.5 H16"/><path d="M0 399.0 H16"/><path d="M0 427.5 H16"/><path d="M0 456.0 H16"/><path d="M0 484.5 H16"/><path d="M0 513.0 H16"/><path d="M0 541.5 H16"/><path d="M0 570.0 H16"/></g></svg>
<div style="position:absolute;left:16px;width:53.5px;top:5.51px;font-size:17px;font-weight:700;text-align:right;letter-spacing:0.6px;color:#000;white-space:pre">1</div>
<div style="position:absolute;left:72px;width:95px;top:5.51px;font-size:17px;font-weight:700;text-align:right;letter-spacing:0.75px;color:#fff;white-space:pre">225694</div>
<div style="position:absolute;left:253px;width:83.5px;top:5.51px;font-size:17px;font-weight:700;text-align:right;letter-spacing:0.75px;color:#fff;white-space:pre">114174</div>
<div style="position:absolute;left:343px;top:5.51px;font-size:17px;font-weight:700;letter-spacing:-0.2px;color:#fff;white-space:pre"></div>
<div style="position:absolute;left:495px;width:428.5px;overflow:hidden;top:5.51px;font-size:17px;font-weight:700;letter-spacing:0.5px;color:#fff;white-space:pre">Айлар р-р д/ин. 100 ЕД/мл картр. 3 мл № 5</div>
<div style="position:absolute;left:931px;width:323px;overflow:hidden;top:5.51px;font-size:17px;font-weight:700;letter-spacing:0.35px;color:#fff;white-space:pre">Biocon India [Индия]</div>
<div style="position:absolute;left:1257px;width:77.5px;top:5.51px;font-size:17px;font-weight:700;text-align:right;letter-spacing:0.75px;color:#fff;white-space:pre">4,666</div>
<div style="position:absolute;left:16px;width:53.5px;top:34.01px;font-size:17px;font-weight:700;text-align:right;letter-spacing:0.6px;color:#000;white-space:pre">2</div>
<div style="position:absolute;left:72px;width:95px;top:34.01px;font-size:17px;font-weight:700;text-align:right;letter-spacing:0.75px;color:#000;white-space:pre">225711</div>
<div style="position:absolute;left:253px;width:83.5px;top:34.01px;font-size:17px;font-weight:700;text-align:right;letter-spacing:0.75px;color:#000;white-space:pre">110295</div>
<div style="position:absolute;left:343px;top:34.01px;font-size:17px;font-weight:700;letter-spacing:-0.2px;color:#000;white-space:pre">Вітчизняний</div>
<div style="position:absolute;left:495px;width:428.5px;overflow:hidden;top:34.01px;font-size:17px;font-weight:700;letter-spacing:0.5px;color:#000;white-space:pre">Аналгин р-р д/ин. 500 мг/мл амп. 2мл №10</div>
<div style="position:absolute;left:931px;width:323px;overflow:hidden;top:34.01px;font-size:17px;font-weight:700;letter-spacing:0.35px;color:#000;white-space:pre">Юрия-Фарм ООО [Украина]</div>
<div style="position:absolute;left:1257px;width:77.5px;top:34.01px;font-size:17px;font-weight:700;text-align:right;letter-spacing:0.75px;color:#000;white-space:pre">1,000</div>
<div style="position:absolute;left:16px;width:53.5px;top:62.51px;font-size:17px;font-weight:700;text-align:right;letter-spacing:0.6px;color:#000;white-space:pre">3</div>
<div style="position:absolute;left:72px;width:95px;top:62.51px;font-size:17px;font-weight:700;text-align:right;letter-spacing:0.75px;color:#000;white-space:pre">225701</div>
<div style="position:absolute;left:253px;width:83.5px;top:62.51px;font-size:17px;font-weight:700;text-align:right;letter-spacing:0.75px;color:#000;white-space:pre">999021</div>
<div style="position:absolute;left:343px;top:62.51px;font-size:17px;font-weight:700;letter-spacing:-0.2px;color:#000;white-space:pre">Вітчизняний</div>
<div style="position:absolute;left:495px;width:428.5px;overflow:hidden;top:62.51px;font-size:17px;font-weight:700;letter-spacing:0.5px;color:#000;white-space:pre">Аналгин табл. 0.5г №10</div>
<div style="position:absolute;left:931px;width:323px;overflow:hidden;top:62.51px;font-size:17px;font-weight:700;letter-spacing:0.35px;color:#000;white-space:pre">Тернопольская ФФ [Украина]</div>
<div style="position:absolute;left:1257px;width:77.5px;top:62.51px;font-size:17px;font-weight:700;text-align:right;letter-spacing:0.75px;color:#000;white-space:pre">3,000</div>
<div style="position:absolute;left:1453.5px;width:283.5px;top:61.01px;font-size:17px;font-weight:700;text-align:center;color:#fff;white-space:pre;letter-spacing:1.5px;text-indent:1.5px">10</div>
<div style="position:absolute;left:16px;width:53.5px;top:91.01px;font-size:17px;font-weight:700;text-align:right;letter-spacing:0.6px;color:#000;white-space:pre">4</div>
<div style="position:absolute;left:72px;width:95px;top:91.01px;font-size:17px;font-weight:700;text-align:right;letter-spacing:0.75px;color:#000;white-space:pre">225720</div>
<div style="position:absolute;left:253px;width:83.5px;top:91.01px;font-size:17px;font-weight:700;text-align:right;letter-spacing:0.75px;color:#000;white-space:pre">46365</div>
<div style="position:absolute;left:343px;top:91.01px;font-size:17px;font-weight:700;letter-spacing:-0.2px;color:#000;white-space:pre">Вітчизняний</div>
<div style="position:absolute;left:495px;width:428.5px;overflow:hidden;top:91.01px;font-size:17px;font-weight:700;letter-spacing:0.5px;color:#000;white-space:pre">Артихол табл. 0,2г №30 *</div>
<div style="position:absolute;left:931px;width:323px;overflow:hidden;top:91.01px;font-size:17px;font-weight:700;letter-spacing:0.35px;color:#000;white-space:pre">Киевский Витаминный Завод [Укра...</div>
<div style="position:absolute;left:1257px;width:77.5px;top:91.01px;font-size:17px;font-weight:700;text-align:right;letter-spacing:0.75px;color:#000;white-space:pre">1,000</div>
<div style="position:absolute;left:16px;width:53.5px;top:119.51px;font-size:17px;font-weight:700;text-align:right;letter-spacing:0.6px;color:#000;white-space:pre">5</div>
<div style="position:absolute;left:72px;width:95px;top:119.51px;font-size:17px;font-weight:700;text-align:right;letter-spacing:0.75px;color:#000;white-space:pre">225695</div>
<div style="position:absolute;left:253px;width:83.5px;top:119.51px;font-size:17px;font-weight:700;text-align:right;letter-spacing:0.75px;color:#000;white-space:pre">125140</div>
<div style="position:absolute;left:343px;top:119.51px;font-size:17px;font-weight:700;letter-spacing:-0.2px;color:#000;white-space:pre">Вітчизняний</div>
<div style="position:absolute;left:495px;width:428.5px;overflow:hidden;top:119.51px;font-size:17px;font-weight:700;letter-spacing:0.5px;color:#000;white-space:pre">Аскорбинка-КВ  дыня 25мг № 10</div>
<div style="position:absolute;left:931px;width:323px;overflow:hidden;top:119.51px;font-size:17px;font-weight:700;letter-spacing:0.35px;color:#000;white-space:pre">Киевский Витаминный Завод [Укра...</div>
<div style="position:absolute;left:1257px;width:77.5px;top:119.51px;font-size:17px;font-weight:700;text-align:right;letter-spacing:0.75px;color:#000;white-space:pre">1,000</div>
<div style="position:absolute;left:1453.5px;width:283.5px;top:118.01px;font-size:17px;font-weight:700;text-align:center;color:#fff;white-space:pre;letter-spacing:1.5px;text-indent:1.5px">10</div>
<div style="position:absolute;left:16px;width:53.5px;top:148.01px;font-size:17px;font-weight:700;text-align:right;letter-spacing:0.6px;color:#000;white-space:pre">6</div>
<div style="position:absolute;left:72px;width:95px;top:148.01px;font-size:17px;font-weight:700;text-align:right;letter-spacing:0.75px;color:#000;white-space:pre">225707</div>
<div style="position:absolute;left:253px;width:83.5px;top:148.01px;font-size:17px;font-weight:700;text-align:right;letter-spacing:0.75px;color:#000;white-space:pre">91187</div>
<div style="position:absolute;left:343px;top:148.01px;font-size:17px;font-weight:700;letter-spacing:-0.2px;color:#000;white-space:pre"></div>
<div style="position:absolute;left:495px;width:428.5px;overflow:hidden;top:148.01px;font-size:17px;font-weight:700;letter-spacing:0.5px;color:#000;white-space:pre">Аспирин кардио табл. 300мг №28</div>
<div style="position:absolute;left:931px;width:323px;overflow:hidden;top:148.01px;font-size:17px;font-weight:700;letter-spacing:0.35px;color:#000;white-space:pre">Bayer [Великобритания]</div>
<div style="position:absolute;left:1257px;width:77.5px;top:148.01px;font-size:17px;font-weight:700;text-align:right;letter-spacing:0.75px;color:#000;white-space:pre">1,000</div>
<div style="position:absolute;left:16px;width:53.5px;top:176.51px;font-size:17px;font-weight:700;text-align:right;letter-spacing:0.6px;color:#000;white-space:pre">7</div>
<div style="position:absolute;left:72px;width:95px;top:176.51px;font-size:17px;font-weight:700;text-align:right;letter-spacing:0.75px;color:#000;white-space:pre">225721</div>
<div style="position:absolute;left:253px;width:83.5px;top:176.51px;font-size:17px;font-weight:700;text-align:right;letter-spacing:0.75px;color:#000;white-space:pre">2663</div>
<div style="position:absolute;left:343px;top:176.51px;font-size:17px;font-weight:700;letter-spacing:-0.2px;color:#000;white-space:pre">Вітчизняний</div>
<div style="position:absolute;left:495px;width:428.5px;overflow:hidden;top:176.51px;font-size:17px;font-weight:700;letter-spacing:0.5px;color:#000;white-space:pre">Ацетилсалициловая к-та табл. 0,5г №10 *</div>
<div style="position:absolute;left:931px;width:323px;overflow:hidden;top:176.51px;font-size:17px;font-weight:700;letter-spacing:0.35px;color:#000;white-space:pre">Дарница ЗАО [Украина]</div>
<div style="position:absolute;left:1257px;width:77.5px;top:176.51px;font-size:17px;font-weight:700;text-align:right;letter-spacing:0.75px;color:#000;white-space:pre">1,000</div>
<div style="position:absolute;left:1453.5px;width:283.5px;top:175.01px;font-size:17px;font-weight:700;text-align:center;color:#fff;white-space:pre;letter-spacing:1.5px;text-indent:1.5px">10</div>
<div style="position:absolute;left:16px;width:53.5px;top:205.01px;font-size:17px;font-weight:700;text-align:right;letter-spacing:0.6px;color:#000;white-space:pre">8</div>
<div style="position:absolute;left:72px;width:95px;top:205.01px;font-size:17px;font-weight:700;text-align:right;letter-spacing:0.75px;color:#000;white-space:pre">225697</div>
<div style="position:absolute;left:253px;width:83.5px;top:205.01px;font-size:17px;font-weight:700;text-align:right;letter-spacing:0.75px;color:#000;white-space:pre">7782</div>
<div style="position:absolute;left:343px;top:205.01px;font-size:17px;font-weight:700;letter-spacing:-0.2px;color:#000;white-space:pre">Вітчизняний</div>
<div style="position:absolute;left:495px;width:428.5px;overflow:hidden;top:205.01px;font-size:17px;font-weight:700;letter-spacing:0.5px;color:#000;white-space:pre">Димексид 100мл</div>
<div style="position:absolute;left:931px;width:323px;overflow:hidden;top:205.01px;font-size:17px;font-weight:700;letter-spacing:0.35px;color:#000;white-space:pre">Лубныфарм ОАО [Украина]</div>
<div style="position:absolute;left:1257px;width:77.5px;top:205.01px;font-size:17px;font-weight:700;text-align:right;letter-spacing:0.75px;color:#000;white-space:pre">1,000</div>
<div style="position:absolute;left:16px;width:53.5px;top:233.51px;font-size:17px;font-weight:700;text-align:right;letter-spacing:0.6px;color:#000;white-space:pre">9</div>
<div style="position:absolute;left:72px;width:95px;top:233.51px;font-size:17px;font-weight:700;text-align:right;letter-spacing:0.75px;color:#000;white-space:pre">225706</div>
<div style="position:absolute;left:253px;width:83.5px;top:233.51px;font-size:17px;font-weight:700;text-align:right;letter-spacing:0.75px;color:#000;white-space:pre">66223</div>
<div style="position:absolute;left:343px;top:233.51px;font-size:17px;font-weight:700;letter-spacing:-0.2px;color:#000;white-space:pre"></div>
<div style="position:absolute;left:495px;width:428.5px;overflow:hidden;top:233.51px;font-size:17px;font-weight:700;letter-spacing:0.5px;color:#000;white-space:pre">Доппельгерц Энерготоник-Н 1000мл</div>
<div style="position:absolute;left:931px;width:323px;overflow:hidden;top:233.51px;font-size:17px;font-weight:700;letter-spacing:0.35px;color:#000;white-space:pre">Queisser Pharma [Германия]</div>
<div style="position:absolute;left:1257px;width:77.5px;top:233.51px;font-size:17px;font-weight:700;text-align:right;letter-spacing:0.75px;color:#000;white-space:pre">1,000</div>
<div style="position:absolute;left:16px;width:53.5px;top:262.01px;font-size:17px;font-weight:700;text-align:right;letter-spacing:0.6px;color:#000;white-space:pre">10</div>
<div style="position:absolute;left:72px;width:95px;top:262.01px;font-size:17px;font-weight:700;text-align:right;letter-spacing:0.75px;color:#000;white-space:pre">225702</div>
<div style="position:absolute;left:253px;width:83.5px;top:262.01px;font-size:17px;font-weight:700;text-align:right;letter-spacing:0.75px;color:#000;white-space:pre">75311</div>
<div style="position:absolute;left:343px;top:262.01px;font-size:17px;font-weight:700;letter-spacing:-0.2px;color:#000;white-space:pre"></div>
<div style="position:absolute;left:495px;width:428.5px;overflow:hidden;top:262.01px;font-size:17px;font-weight:700;letter-spacing:0.5px;color:#000;white-space:pre">Идеал капс. №60</div>
<div style="position:absolute;left:931px;width:323px;overflow:hidden;top:262.01px;font-size:17px;font-weight:700;letter-spacing:0.35px;color:#000;white-space:pre">Индонезия [Индонезия]</div>
<div style="position:absolute;left:1257px;width:77.5px;top:262.01px;font-size:17px;font-weight:700;text-align:right;letter-spacing:0.75px;color:#000;white-space:pre">1,000</div>
<div style="position:absolute;left:16px;width:53.5px;top:290.51px;font-size:17px;font-weight:700;text-align:right;letter-spacing:0.6px;color:#000;white-space:pre">11</div>
<div style="position:absolute;left:72px;width:95px;top:290.51px;font-size:17px;font-weight:700;text-align:right;letter-spacing:0.75px;color:#000;white-space:pre">225719</div>
<div style="position:absolute;left:253px;width:83.5px;top:290.51px;font-size:17px;font-weight:700;text-align:right;letter-spacing:0.75px;color:#000;white-space:pre">9196</div>
<div style="position:absolute;left:343px;top:290.51px;font-size:17px;font-weight:700;letter-spacing:-0.2px;color:#000;white-space:pre"></div>
<div style="position:absolute;left:495px;width:428.5px;overflow:hidden;top:290.51px;font-size:17px;font-weight:700;letter-spacing:0.5px;color:#000;white-space:pre">Имодиум капс. 2мг №20 *</div>
<div style="position:absolute;left:931px;width:323px;overflow:hidden;top:290.51px;font-size:17px;font-weight:700;letter-spacing:0.35px;color:#000;white-space:pre">Janssen [Бельгия]</div>
<div style="position:absolute;left:1257px;width:77.5px;top:290.51px;font-size:17px;font-weight:700;text-align:right;letter-spacing:0.75px;color:#000;white-space:pre">3,000</div>
<div style="position:absolute;left:16px;width:53.5px;top:319.01px;font-size:17px;font-weight:700;text-align:right;letter-spacing:0.6px;color:#000;white-space:pre">12</div>
<div style="position:absolute;left:72px;width:95px;top:319.01px;font-size:17px;font-weight:700;text-align:right;letter-spacing:0.75px;color:#000;white-space:pre">225714</div>
<div style="position:absolute;left:253px;width:83.5px;top:319.01px;font-size:17px;font-weight:700;text-align:right;letter-spacing:0.75px;color:#000;white-space:pre">117399</div>
<div style="position:absolute;left:343px;top:319.01px;font-size:17px;font-weight:700;letter-spacing:-0.2px;color:#000;white-space:pre"></div>
<div style="position:absolute;left:495px;width:428.5px;overflow:hidden;top:319.01px;font-size:17px;font-weight:700;letter-spacing:0.5px;color:#000;white-space:pre">Инсти гран. пакет № 5</div>
<div style="position:absolute;left:931px;width:323px;overflow:hidden;top:319.01px;font-size:17px;font-weight:700;letter-spacing:0.35px;color:#000;white-space:pre">Herbion Pakistan [Пакистан]</div>
<div style="position:absolute;left:1257px;width:77.5px;top:319.01px;font-size:17px;font-weight:700;text-align:right;letter-spacing:0.75px;color:#000;white-space:pre">0,800</div>
<div style="position:absolute;left:16px;width:53.5px;top:347.51px;font-size:17px;font-weight:700;text-align:right;letter-spacing:0.6px;color:#000;white-space:pre">13</div>
<div style="position:absolute;left:72px;width:95px;top:347.51px;font-size:17px;font-weight:700;text-align:right;letter-spacing:0.75px;color:#000;white-space:pre">225712</div>
<div style="position:absolute;left:253px;width:83.5px;top:347.51px;font-size:17px;font-weight:700;text-align:right;letter-spacing:0.75px;color:#000;white-space:pre">119023</div>
<div style="position:absolute;left:343px;top:347.51px;font-size:17px;font-weight:700;letter-spacing:-0.2px;color:#000;white-space:pre"></div>
<div style="position:absolute;left:495px;width:428.5px;overflow:hidden;top:347.51px;font-size:17px;font-weight:700;letter-spacing:0.5px;color:#000;white-space:pre">Карвелис пастилки блистер № 20</div>
<div style="position:absolute;left:931px;width:323px;overflow:hidden;top:347.51px;font-size:17px;font-weight:700;letter-spacing:0.35px;color:#000;white-space:pre">Cordus GmbH- Dusseldorf [Германия]</div>
<div style="position:absolute;left:1257px;width:77.5px;top:347.51px;font-size:17px;font-weight:700;text-align:right;letter-spacing:0.75px;color:#000;white-space:pre">1,000</div>
<div style="position:absolute;left:16px;width:53.5px;top:376.01px;font-size:17px;font-weight:700;text-align:right;letter-spacing:0.6px;color:#000;white-space:pre">14</div>
<div style="position:absolute;left:72px;width:95px;top:376.01px;font-size:17px;font-weight:700;text-align:right;letter-spacing:0.75px;color:#000;white-space:pre">225722</div>
<div style="position:absolute;left:253px;width:83.5px;top:376.01px;font-size:17px;font-weight:700;text-align:right;letter-spacing:0.75px;color:#000;white-space:pre">125130</div>
<div style="position:absolute;left:343px;top:376.01px;font-size:17px;font-weight:700;letter-spacing:-0.2px;color:#000;white-space:pre"></div>
<div style="position:absolute;left:495px;width:428.5px;overflow:hidden;top:376.01px;font-size:17px;font-weight:700;letter-spacing:0.5px;color:#000;white-space:pre">Лазикс Нео р-р д/ин. 10мг/мл амп. 2мл №10</div>
<div style="position:absolute;left:931px;width:323px;overflow:hidden;top:376.01px;font-size:17px;font-weight:700;letter-spacing:0.35px;color:#000;white-space:pre">Зентива [Румыния]</div>
<div style="position:absolute;left:1257px;width:77.5px;top:376.01px;font-size:17px;font-weight:700;text-align:right;letter-spacing:0.75px;color:#000;white-space:pre">1,000</div>
<div style="position:absolute;left:16px;width:53.5px;top:404.51px;font-size:17px;font-weight:700;text-align:right;letter-spacing:0.6px;color:#000;white-space:pre">15</div>
<div style="position:absolute;left:72px;width:95px;top:404.51px;font-size:17px;font-weight:700;text-align:right;letter-spacing:0.75px;color:#000;white-space:pre">225708</div>
<div style="position:absolute;left:253px;width:83.5px;top:404.51px;font-size:17px;font-weight:700;text-align:right;letter-spacing:0.75px;color:#000;white-space:pre">82758</div>
<div style="position:absolute;left:343px;top:404.51px;font-size:17px;font-weight:700;letter-spacing:-0.2px;color:#000;white-space:pre"></div>
<div style="position:absolute;left:495px;width:428.5px;overflow:hidden;top:404.51px;font-size:17px;font-weight:700;letter-spacing:0.5px;color:#000;white-space:pre">Лазикс табл. 40мг №45</div>
<div style="position:absolute;left:931px;width:323px;overflow:hidden;top:404.51px;font-size:17px;font-weight:700;letter-spacing:0.35px;color:#000;white-space:pre">Aventis Pharma [Великобритания]</div>
<div style="position:absolute;left:1257px;width:77.5px;top:404.51px;font-size:17px;font-weight:700;text-align:right;letter-spacing:0.75px;color:#000;white-space:pre">0,220</div>
<div style="position:absolute;left:16px;width:53.5px;top:433.01px;font-size:17px;font-weight:700;text-align:right;letter-spacing:0.6px;color:#000;white-space:pre">16</div>
<div style="position:absolute;left:72px;width:95px;top:433.01px;font-size:17px;font-weight:700;text-align:right;letter-spacing:0.75px;color:#000;white-space:pre">225696</div>
<div style="position:absolute;left:253px;width:83.5px;top:433.01px;font-size:17px;font-weight:700;text-align:right;letter-spacing:0.75px;color:#000;white-space:pre">97510</div>
<div style="position:absolute;left:343px;top:433.01px;font-size:17px;font-weight:700;letter-spacing:-0.2px;color:#000;white-space:pre">Вітчизняний</div>
<div style="position:absolute;left:495px;width:428.5px;overflow:hidden;top:433.01px;font-size:17px;font-weight:700;letter-spacing:0.5px;color:#000;white-space:pre">Натрия хлорид 0,9% р-р 2мл №10 небулы</div>
<div style="position:absolute;left:931px;width:323px;overflow:hidden;top:433.01px;font-size:17px;font-weight:700;letter-spacing:0.35px;color:#000;white-space:pre">Юрия-Фарм ООО [Украина]</div>
<div style="position:absolute;left:1257px;width:77.5px;top:433.01px;font-size:17px;font-weight:700;text-align:right;letter-spacing:0.75px;color:#000;white-space:pre">1,000</div>
<div style="position:absolute;left:16px;width:53.5px;top:461.51px;font-size:17px;font-weight:700;text-align:right;letter-spacing:0.6px;color:#000;white-space:pre">17</div>
<div style="position:absolute;left:72px;width:95px;top:461.51px;font-size:17px;font-weight:700;text-align:right;letter-spacing:0.75px;color:#000;white-space:pre">225693</div>
<div style="position:absolute;left:253px;width:83.5px;top:461.51px;font-size:17px;font-weight:700;text-align:right;letter-spacing:0.75px;color:#000;white-space:pre">125049</div>
<div style="position:absolute;left:343px;top:461.51px;font-size:17px;font-weight:700;letter-spacing:-0.2px;color:#000;white-space:pre"></div>
<div style="position:absolute;left:495px;width:428.5px;overflow:hidden;top:461.51px;font-size:17px;font-weight:700;letter-spacing:0.5px;color:#000;white-space:pre">Омез капс. 20мг №30</div>
<div style="position:absolute;left:931px;width:323px;overflow:hidden;top:461.51px;font-size:17px;font-weight:700;letter-spacing:0.35px;color:#000;white-space:pre">Dr. Reddy&#x27;s [Индия]</div>
<div style="position:absolute;left:1257px;width:77.5px;top:461.51px;font-size:17px;font-weight:700;text-align:right;letter-spacing:0.75px;color:#000;white-space:pre">0,333</div>
<div style="position:absolute;left:16px;width:53.5px;top:490.01px;font-size:17px;font-weight:700;text-align:right;letter-spacing:0.6px;color:#000;white-space:pre">18</div>
<div style="position:absolute;left:72px;width:95px;top:490.01px;font-size:17px;font-weight:700;text-align:right;letter-spacing:0.75px;color:#000;white-space:pre">225703</div>
<div style="position:absolute;left:253px;width:83.5px;top:490.01px;font-size:17px;font-weight:700;text-align:right;letter-spacing:0.75px;color:#000;white-space:pre">105703</div>
<div style="position:absolute;left:343px;top:490.01px;font-size:17px;font-weight:700;letter-spacing:-0.2px;color:#000;white-space:pre">Вітчизняний</div>
<div style="position:absolute;left:495px;width:428.5px;overflow:hidden;top:490.01px;font-size:17px;font-weight:700;letter-spacing:0.5px;color:#000;white-space:pre">Ототон кап. уш. фл. 16 г № 1</div>
<div style="position:absolute;left:931px;width:323px;overflow:hidden;top:490.01px;font-size:17px;font-weight:700;letter-spacing:0.35px;color:#000;white-space:pre">Фармак [Украина]</div>
<div style="position:absolute;left:1257px;width:77.5px;top:490.01px;font-size:17px;font-weight:700;text-align:right;letter-spacing:0.75px;color:#000;white-space:pre">2,000</div>
<div style="position:absolute;left:16px;width:53.5px;top:518.51px;font-size:17px;font-weight:700;text-align:right;letter-spacing:0.6px;color:#000;white-space:pre">19</div>
<div style="position:absolute;left:72px;width:95px;top:518.51px;font-size:17px;font-weight:700;text-align:right;letter-spacing:0.75px;color:#000;white-space:pre">225704</div>
<div style="position:absolute;left:253px;width:83.5px;top:518.51px;font-size:17px;font-weight:700;text-align:right;letter-spacing:0.75px;color:#000;white-space:pre">74393</div>
<div style="position:absolute;left:343px;top:518.51px;font-size:17px;font-weight:700;letter-spacing:-0.2px;color:#000;white-space:pre">Вітчизняний</div>
<div style="position:absolute;left:495px;width:428.5px;overflow:hidden;top:518.51px;font-size:17px;font-weight:700;letter-spacing:0.5px;color:#000;white-space:pre">Парацетамол беби сусп. орал. 2,4% саше 10 мл...</div>
<div style="position:absolute;left:931px;width:323px;overflow:hidden;top:518.51px;font-size:17px;font-weight:700;letter-spacing:0.35px;color:#000;white-space:pre">Здоровье [Украина]</div>
<div style="position:absolute;left:1257px;width:77.5px;top:518.51px;font-size:17px;font-weight:700;text-align:right;letter-spacing:0.75px;color:#000;white-space:pre">1,000</div>
<div style="position:absolute;left:16px;width:53.5px;top:547.01px;font-size:17px;font-weight:700;text-align:right;letter-spacing:0.6px;color:#000;white-space:pre">20</div>
<div style="position:absolute;left:72px;width:95px;top:547.01px;font-size:17px;font-weight:700;text-align:right;letter-spacing:0.75px;color:#000;white-space:pre">225709</div>
<div style="position:absolute;left:253px;width:83.5px;top:547.01px;font-size:17px;font-weight:700;text-align:right;letter-spacing:0.75px;color:#000;white-space:pre">125118</div>
<div style="position:absolute;left:343px;top:547.01px;font-size:17px;font-weight:700;letter-spacing:-0.2px;color:#000;white-space:pre">Вітчизняний</div>
<div style="position:absolute;left:495px;width:428.5px;overflow:hidden;top:547.01px;font-size:17px;font-weight:700;letter-spacing:0.5px;color:#000;white-space:pre">Парацетамол супп. 500 мг №10</div>
<div style="position:absolute;left:931px;width:323px;overflow:hidden;top:547.01px;font-size:17px;font-weight:700;letter-spacing:0.35px;color:#000;white-space:pre">Здоровье ООО ФК [Украина]</div>
<div style="position:absolute;left:1257px;width:77.5px;top:547.01px;font-size:17px;font-weight:700;text-align:right;letter-spacing:0.75px;color:#000;white-space:pre">1,000</div>
<div style="position:absolute;left:16px;top:0px;width:56px;height:28.5px;border:1.5px dotted #333;box-sizing:border-box"></div>
<div style="position:absolute;left:72px;top:0px;width:2060.5px;height:28.5px;border-top:1.5px dotted #d08050;border-bottom:1.5px dotted #d08050;box-sizing:border-box"></div>
<svg style="position:absolute;left:3px;top:9px" width="10" height="12" viewBox="0 0 10 12"><path d="M1 1 L8 6 L1 11" fill="none" stroke="#222" stroke-width="1.4"/><path d="M1 4 L5 6 L1 8 Z" fill="#222"/></svg>
</div>
<div style="position:absolute;left:7px;top:917px;width:2132.5px;height:2px;background:#9a9a9a"></div>
<div style="position:absolute;left:7px;top:919px;width:2132.5px;height:32px;background:#f0f0f0"></div>
<div style="position:absolute;left:23px;top:919px;width:1px;height:32px;background:#c8c8c8"></div>
<div style="position:absolute;left:500px;top:921px;width:432px;height:28px;background:#e6e8e8;border:1px solid #d8dada;box-sizing:border-box"></div>
<div style="position:absolute;left:1266px;top:921px;width:76px;height:28px;background:#e6e8e8;border:1px solid #d8dada;box-sizing:border-box"></div>
<div id="t63" style="position:absolute;left:505px;top:925.62px;font-size:17px;font-weight:700;color:#111;white-space:pre;line-height:normal;letter-spacing:0.085px;"><span>Запис 1 із 33</span></div>
<div id="t64" style="position:absolute;right:833px;top:925.62px;font-size:17px;font-weight:700;color:#111;white-space:pre;line-height:normal;letter-spacing:1.113px;"><span>43,82</span></div>
<div style="position:absolute;left:7px;top:951px;width:2132.5px;height:1px;background:#b0b0b0"></div>
<div style="position:absolute;left:7px;top:952px;width:2132.5px;height:30px;background:#f0f0f0"></div>
<div style="position:absolute;left:30px;top:954px;width:732px;height:22px;background:#cdcdcd"></div>
<div style="position:absolute;left:7px;top:977px;width:2153px;height:5px;background:#fff"></div>
<svg style="position:absolute;left:12px;top:959px" width="10" height="12" viewBox="0 0 10 12"><path d="M8 1 L3.2 6 L8 11" fill="none" stroke="#606060" stroke-width="2.8" stroke-linejoin="miter"/></svg>
<svg style="position:absolute;left:2122px;top:959px" width="10" height="12" viewBox="0 0 10 12"><path d="M2 1 L6.8 6 L2 11" fill="none" stroke="#606060" stroke-width="2.8" stroke-linejoin="miter"/></svg>
<div style="position:absolute;left:2139.5px;top:294px;width:20.5px;height:688px;background:#f0f0f0"></div>
<div style="position:absolute;left:2141px;top:307px;width:18px;height:357px;background:#cdcdcd"></div>
<svg style="position:absolute;left:2144px;top:288px" width="12" height="8" viewBox="0 0 12 8"><path d="M1 7 L6 2 L11 7" fill="none" stroke="#606060" stroke-width="2.2"/></svg>
<svg style="position:absolute;left:2146px;top:936px" width="12" height="9" viewBox="0 0 12 9"><path d="M1 1 L6 6.5 L11 1" fill="none" stroke="#606060" stroke-width="2.8" stroke-linejoin="miter"/></svg>
<div style="position:absolute;left:0px;top:982px;width:2171px;height:12px;background:#f0f0f0"></div>
<div style="position:absolute;left:0px;top:990px;width:2171px;height:1px;background:#a8a8a8"></div>
<div style="position:absolute;left:0px;top:994px;width:2171px;height:274px;background:#f0f0f0"></div>
<div style="position:absolute;left:8px;top:998px;width:66px;height:30px;background:#fff"></div>
<div style="position:absolute;left:74px;top:998px;width:60px;height:24px;background:#eaeaea;border-right:1px solid #d8d8d8;box-sizing:border-box"></div>
<div style="position:absolute;left:134px;top:998px;width:258.5px;height:24px;background:#eaeaea;border-right:1px solid #d8d8d8;box-sizing:border-box"></div>
<div style="position:absolute;left:392.5px;top:998px;width:264px;height:24px;background:#eaeaea;border-right:1px solid #d8d8d8;box-sizing:border-box"></div>
<div id="t65" style="position:absolute;left:22px;top:999.52px;font-size:16px;font-weight:400;color:#1a1a1a;white-space:pre;line-height:normal;letter-spacing:-0.320px;"><span>Філія</span></div>
<div id="t66" style="position:absolute;left:80.5px;top:1001.52px;font-size:16px;font-weight:400;color:#1a1a1a;white-space:pre;line-height:normal;letter-spacing:-0.055px;"><span>Зайве</span></div>
<div id="t67" style="position:absolute;left:144px;top:1001.52px;font-size:16px;font-weight:400;color:#1a1a1a;white-space:pre;line-height:normal;letter-spacing:0.069px;"><span>Заявка. Залишки по замінникам</span></div>
<div id="t68" style="position:absolute;left:402px;top:1001.52px;font-size:16px;font-weight:400;color:#1a1a1a;white-space:pre;line-height:normal;letter-spacing:0.305px;"><span>Заявка до постачальника Зайве</span></div>
<div style="position:absolute;left:8px;top:1022px;width:2152px;height:246px;background:#fff"></div>
<div style="position:absolute;left:74px;top:1021.5px;width:2086px;height:1px;background:#dadada"></div>
<div style="position:absolute;left:12.5px;top:1027.5px;width:2145px;height:240px;background:#fff;border:1.5px solid #a8aeb4;box-sizing:border-box"></div>
<div style="position:absolute;left:18px;top:1037.0px;width:1.5px;height:1.5px;background:#333"></div>
<div style="position:absolute;left:21px;top:1037.0px;width:5px;height:1.5px;background:#333"></div>
<div style="position:absolute;left:18px;top:1040.2px;width:1.5px;height:1.5px;background:#333"></div>
<div style="position:absolute;left:21px;top:1040.2px;width:5px;height:1.5px;background:#333"></div>
<div style="position:absolute;left:18px;top:1043.4px;width:1.5px;height:1.5px;background:#333"></div>
<div style="position:absolute;left:21px;top:1043.4px;width:5px;height:1.5px;background:#333"></div>
<div style="position:absolute;left:18px;top:1046.6px;width:1.5px;height:1.5px;background:#333"></div>
<div style="position:absolute;left:21px;top:1046.6px;width:5px;height:1.5px;background:#333"></div>
<div style="position:absolute;left:18px;top:1049.8px;width:1.5px;height:1.5px;background:#333"></div>
<div style="position:absolute;left:21px;top:1049.8px;width:5px;height:1.5px;background:#333"></div>
<div style="position:absolute;left:31px;top:1029px;width:1px;height:30px;background:#e0e0e0"></div>
<div style="position:absolute;left:76px;top:1029px;width:1px;height:30px;background:#e0e0e0"></div>
<div id="t69" style="position:absolute;left:36px;top:1035.52px;font-size:16px;font-weight:400;color:#1a1a1a;white-space:pre;line-height:normal;letter-spacing:-0.570px;"><span>Філія</span></div>
<div id="t70" style="position:absolute;left:80.5px;top:1035.52px;font-size:16px;font-weight:400;color:#1a1a1a;white-space:pre;line-height:normal;letter-spacing:-0.258px;"><span>Замовлено</span></div>
<div id="t71" style="position:absolute;left:-0.5px;width:200px;text-align:center;top:1124.62px;font-size:17px;font-weight:700;color:#808080;white-space:pre;line-height:normal;letter-spacing:0.900px;"><span>&lt;Немає даних</span></div>
<div id="t72" style="position:absolute;left:-0.5px;width:200px;text-align:center;top:1144.12px;font-size:17px;font-weight:700;color:#808080;white-space:pre;line-height:normal;letter-spacing:0.900px;"><span>для</span></div>
<div id="t73" style="position:absolute;left:-0.5px;width:200px;text-align:center;top:1163.62px;font-size:17px;font-weight:700;color:#808080;white-space:pre;line-height:normal;letter-spacing:0.600px;"><span>відображення</span></div>
<div id="t74" style="position:absolute;left:-0.5px;width:200px;text-align:center;top:1182.62px;font-size:17px;font-weight:700;color:#808080;white-space:pre;line-height:normal;"><span>&gt;</span></div>
<div style="position:absolute;left:0px;top:1268px;width:2171px;height:103px;background:#f0f0f0"></div>
<div style="position:absolute;left:5px;top:1276.5px;width:2159px;height:1px;background:#b8b8b8"></div>
<div style="position:absolute;left:11px;top:1281px;width:19px;height:19px;background:#fff;border:1.5px solid #333;box-sizing:border-box"></div>
<svg style="position:absolute;left:13px;top:1284px" width="15" height="13" viewBox="0 0 15 13"><path d="M1.5 6.5 L5.5 10.5 L13.5 1.5" fill="none" stroke="#444" stroke-width="1.6"/></svg>
<div id="t75" style="position:absolute;left:34px;top:1282.57px;font-size:16.5px;font-weight:400;color:#111;white-space:pre;line-height:normal;letter-spacing:0.244px;"><span>Показувати деталі</span></div>
<div style="position:absolute;left:10px;top:1307px;width:186.5px;height:33px;border:1.5px solid #222;box-sizing:border-box"></div>
<div style="position:absolute;left:200px;top:1307px;width:186px;height:33px;border:1.5px solid #222;box-sizing:border-box"></div>
<div style="position:absolute;left:390.5px;top:1307px;width:186.5px;height:33px;border:1.5px solid #222;box-sizing:border-box"></div>
<div style="position:absolute;left:581px;top:1306.5px;width:186.5px;height:34px;background:#ffd3a6;border:1.5px solid #3c8ee0;box-sizing:border-box"></div>
<div id="t76" style="position:absolute;left:14px;top:1314.52px;font-size:16px;font-weight:400;color:#111;white-space:pre;line-height:normal;letter-spacing:0.034px;"><span>Головна</span></div>
<div id="t77" style="position:absolute;left:204px;top:1314.52px;font-size:16px;font-weight:400;color:#111;white-space:pre;line-height:normal;letter-spacing:0.413px;"><span>Список: Заявки пост ...</span></div>
<div id="t78" style="position:absolute;left:394px;top:1314.52px;font-size:16px;font-weight:400;color:#111;white-space:pre;line-height:normal;letter-spacing:0.413px;"><span>Список: Заявки пост ...</span></div>
<div id="t79" style="position:absolute;left:585px;top:1314.52px;font-size:16px;font-weight:400;color:#111;white-space:pre;line-height:normal;letter-spacing:0.206px;"><span>Заявка поставщикам  ..</span></div>
<div style="position:absolute;left:5px;top:1344.5px;width:2159px;height:1px;background:#d0d0d0"></div>
<svg style="position:absolute;left:9px;top:1350px" width="19" height="21" viewBox="0 0 19 21"><path d="M1 3 Q1 0.5 4 0.5 H15 Q18 0.5 18 3.5 V19 Q18 21 15 21 H4 Q1 21 1 18 Z" fill="#7a80c0"/><path d="M2 2 H16 V7 H2 Z" fill="#c0c0dc"/><path d="M2 8 H17 M2 11 H17 M2 14 H17" stroke="#2a7ad8" stroke-width="1.8"/><path d="M2 9.5 H17 M2 12.5 H17" stroke="#80b0e8" stroke-width="1"/><path d="M2 2 V17" stroke="#90b8f0" stroke-width="2"/></svg>
<div id="t80" style="position:absolute;left:35px;top:1351.52px;font-size:16px;font-weight:400;color:#111;white-space:pre;line-height:normal;letter-spacing:0.246px;"><span>База даних: TASA3@TITAN</span></div>
<div style="position:absolute;left:300px;top:1347px;width:1px;height:24px;background:#d0d0d0"></div>
<svg style="position:absolute;left:308px;top:1349px" width="18" height="22" viewBox="0 0 18 22"><circle cx="6.5" cy="6" r="5.5" fill="#e84020"/><ellipse cx="10" cy="9" rx="5" ry="6" fill="#9aa0e0"/><path d="M7 12 Q10 15 13 12 L10 15 Z" fill="#e8a050"/><path d="M1.5 22 Q1.5 14 8 14 H12 Q17 14 17 22 Z" fill="#a0a4e4"/><path d="M6 17 Q9 19 12 17" stroke="#e0e4fc" stroke-width="1.5" fill="none"/></svg>
<div id="t81" style="position:absolute;left:334px;top:1351.52px;font-size:16px;font-weight:400;color:#111;white-space:pre;line-height:normal;letter-spacing:-0.006px;"><span>Користувач: GIFT</span></div>
<div style="position:absolute;left:608.5px;top:1347px;width:1px;height:24px;background:#d0d0d0"></div>
<svg style="position:absolute;left:611px;top:1348px" width="22" height="23" viewBox="0 0 22 23"><path d="M2 8 L4 5 H14 L20 9 V20 L14 22 H2 Z" fill="#8a90d0"/><path d="M2 8 L4 5 H14 L20 9 L14 11 H2 Z" fill="#c0c4ec"/><path d="M14 2 L20 9" stroke="#707898" stroke-width="1.4"/><path d="M5 10 L3 16 L5 16 L3 21" stroke="#f0d040" stroke-width="2" fill="none"/><path d="M13 14 L11 19 L13 19 L11 23" stroke="#f0c030" stroke-width="2" fill="none"/></svg>
<div id="t82" style="position:absolute;left:640px;top:1351.52px;font-size:16px;font-weight:400;color:#111;white-space:pre;line-height:normal;"><span>3</span></div>
<div style="position:absolute;left:667px;top:1347px;width:1px;height:24px;background:#d0d0d0"></div>
<div id="t83" style="position:absolute;left:671.5px;top:1351.52px;font-size:16px;font-weight:400;color:#111;white-space:pre;line-height:normal;letter-spacing:0.276px;"><span>Кассовый аппарат не подключен</span></div>
<div style="position:absolute;left:1123.5px;top:1347px;width:1px;height:24px;background:#d0d0d0"></div>
<div id="t84" style="position:absolute;left:1128px;top:1351.52px;font-size:16px;font-weight:400;color:#111;white-space:pre;line-height:normal;letter-spacing:0.019px;"><span>Зона: Склад [1]</span></div>
<div style="position:absolute;left:0px;top:0px;width:5px;height:1371px;background:#000"></div>
<div style="position:absolute;left:2164px;top:0px;width:7px;height:1371px;background:#000"></div>
<div style="position:absolute;left:4px;top:26.5px;width:2161.5px;height:175.5px;border:4px solid #ff0000;box-sizing:border-box;border-radius:2px;filter:drop-shadow(0 1px 0.3px rgba(40,70,70,0.55))"></div>
<div style="position:absolute;left:3px;top:208px;width:2160.5px;height:80.5px;border:4px solid #ff0000;box-sizing:border-box;border-radius:2px;filter:drop-shadow(0 1px 0.3px rgba(40,70,70,0.55))"></div>
<div style="position:absolute;left:3px;top:294.5px;width:2160px;height:691.5px;border:4px solid #ff0000;box-sizing:border-box;border-radius:2px;filter:drop-shadow(0 1px 0.3px rgba(40,70,70,0.55))"></div>
<div style="position:absolute;left:4px;top:994px;width:2159px;height:274px;border:4px solid #ff0000;box-sizing:border-box;border-radius:2px;filter:drop-shadow(0 1px 0.3px rgba(40,70,70,0.55))"></div>
<svg style="position:absolute;left:1920px;top:25px;overflow:visible" width="40" height="45"><defs><filter id="sh1b" x="-50%" y="-50%" width="200%" height="200%"><feDropShadow dx="-0.5" dy="1.5" stdDeviation="0.6" flood-color="#555" flood-opacity="0.9"/></filter></defs>
<path d="M21.5 10 H26 V37 H20 V16.5 L15.4 20.2 L12.9 16.8 Z" fill="#fff" stroke="#fff" stroke-width="7" stroke-linejoin="round" filter="url(#sh1b)"/>
<path d="M21.5 10 H26 V37 H20 V16.5 L15.4 20.2 L12.9 16.8 Z" fill="#ff0000"/></svg>
<svg style="position:absolute;left:1924px;top:202px;overflow:visible" width="50" height="50"><defs><filter id="sh2" x="-50%" y="-50%" width="200%" height="200%"><feDropShadow dx="-0.5" dy="1.5" stdDeviation="0.6" flood-color="#555" flood-opacity="0.9"/></filter></defs>
<g transform="translate(10,40) scale(1.12,1)"><text x="0" y="0" font-family="Liberation Sans" font-weight="700" font-size="38" fill="#fff" stroke="#fff" stroke-width="7" stroke-linejoin="round" filter="url(#sh2)">2</text>
<text x="0" y="0" font-family="Liberation Sans" font-weight="700" font-size="38" fill="#ff0000">2</text></g></svg>
<svg style="position:absolute;left:1927.5px;top:288px;overflow:visible" width="50" height="50"><defs><filter id="sh3" x="-50%" y="-50%" width="200%" height="200%"><feDropShadow dx="-0.5" dy="1.5" stdDeviation="0.6" flood-color="#555" flood-opacity="0.9"/></filter></defs>
<g transform="translate(10,40) scale(1.12,1)"><text x="0" y="0" font-family="Liberation Sans" font-weight="700" font-size="38" fill="#fff" stroke="#fff" stroke-width="7" stroke-linejoin="round" filter="url(#sh3)">3</text>
<text x="0" y="0" font-family="Liberation Sans" font-weight="700" font-size="38" fill="#ff0000">3</text></g></svg>
<svg style="position:absolute;left:1942.5px;top:992px;overflow:visible" width="50" height="50"><defs><filter id="sh4" x="-50%" y="-50%" width="200%" height="200%"><feDropShadow dx="-0.5" dy="1.5" stdDeviation="0.6" flood-color="#555" flood-opacity="0.9"/></filter></defs>
<g transform="translate(10,40) scale(1.12,1)"><text x="0" y="0" font-family="Liberation Sans" font-weight="700" font-size="38" fill="#fff" stroke="#fff" stroke-width="7" stroke-linejoin="round" filter="url(#sh4)">4</text>
<text x="0" y="0" font-family="Liberation Sans" font-weight="700" font-size="38" fill="#ff0000">4</text></g></svg>
</body></html>
